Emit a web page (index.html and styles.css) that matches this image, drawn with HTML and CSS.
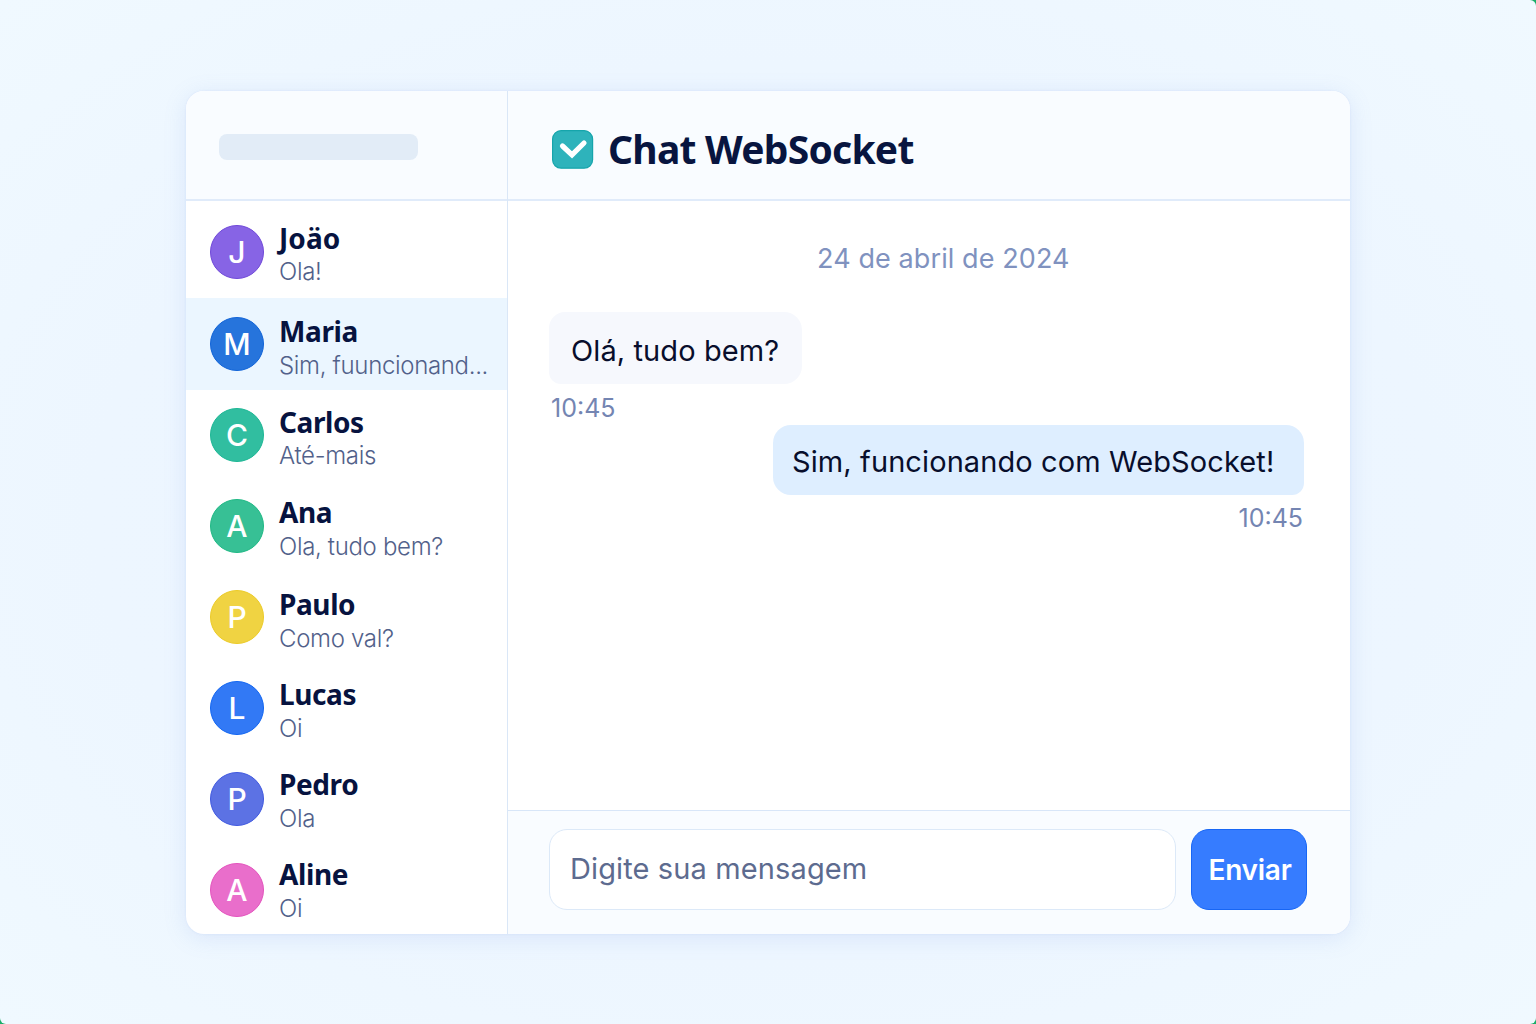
FILE: index.html
```html
<!DOCTYPE html>
<html lang="pt-BR">
<head>
<meta charset="utf-8">
<title>Chat WebSocket</title>
<link rel="stylesheet" href="styles.css">
</head>
<body>
<div class="page">
  <div class="card">
    <aside class="sidebar">
      <div class="sidebar-head"><div class="placeholder"></div></div>
      <ul class="contacts">
        <li class="contact"><span class="avatar violet">J</span><div class="info"><span class="name">Joäo</span><span class="preview">Ola!</span></div></li>
        <li class="contact active"><span class="avatar blue">M</span><div class="info"><span class="name">Maria</span><span class="preview">Sim, fuuncionand...</span></div></li>
        <li class="contact"><span class="avatar teal">C</span><div class="info"><span class="name">Carlos</span><span class="preview">Até-mais</span></div></li>
        <li class="contact"><span class="avatar green">A</span><div class="info"><span class="name">Ana</span><span class="preview">Ola, tudo bem?</span></div></li>
        <li class="contact"><span class="avatar yellow">P</span><div class="info"><span class="name">Paulo</span><span class="preview">Como val?</span></div></li>
        <li class="contact"><span class="avatar azure">L</span><div class="info"><span class="name">Lucas</span><span class="preview">Oi</span></div></li>
        <li class="contact"><span class="avatar indigo">P</span><div class="info"><span class="name">Pedro</span><span class="preview">Ola</span></div></li>
        <li class="contact"><span class="avatar pink">A</span><div class="info"><span class="name">Aline</span><span class="preview">Oi</span></div></li>
      </ul>
    </aside>
    <main class="chat">
      <header class="chat-head">
        <svg class="logo" width="42" height="40" viewBox="0 0 42 40"><rect x=".6" y=".6" width="40" height="37.600" rx="8.5" fill="#2eb3bb" stroke="#16a5ab" stroke-width="1.2"/><path d="M10.500 16 20 24.800 32 13" fill="none" stroke="#fff" stroke-width="5.2" stroke-linecap="round" stroke-linejoin="miter"/></svg>
        <h1 class="title">Chat WebSocket</h1>
      </header>
      <section class="messages">
        <div class="date">24 de abril de 2024</div>
        <div class="bubble received">Olá, tudo bem?</div>
        <div class="time">10:45</div>
        <div class="bubble sent">Sim, funcionando com WebSocket!</div>
        <div class="time own">10:45</div>
      </section>
      <footer class="composer">
        <div class="field">Digite sua mensagem</div>
        <button class="send">Enviar</button>
      </footer>
    </main>
  </div>
</div>
</body>
</html>
```
FILE: styles.css
```css
* { box-sizing: border-box; }
body { margin: 0; background: #18ad68; font-family: Inter, "Liberation Sans", sans-serif; }
.page { width: 1536px; height: 1024px; padding: 91px 186px 90px; overflow: hidden; border-radius: 0 6px 6px 6px; background: radial-gradient(ellipse at center, #ebf5ff 0%, #edf6ff 62%, #f0f9ff 100%); }
.card { display: grid; grid-template-columns: 322px 1fr; width: 1164px; height: 843px; overflow: hidden; border-radius: 18px; background: #fff; box-shadow: 0 4px 22px rgba(120, 150, 225, .17), 0 0 2px rgba(120, 150, 225, .15); }
.sidebar { min-height: 0; border-right: 1px solid #dae7f7; }
.sidebar-head { height: 110px; padding: 43px 33px; background: #f9fcff; border-bottom: 2px solid #e0ebfa; }
.placeholder { width: 199px; height: 26px; border-radius: 8px; background: #e2ecf7; }
.contacts { list-style: none; margin: 0; padding: 6px 0 0; }
.contact { display: flex; height: 91px; align-items: flex-start; gap: 15px; padding: 18px 0 0 24px; }
.contact.active { height: 92px; padding-top: 19px; background: #ebf6ff; }
.avatar { display: flex; flex: none; align-items: center; justify-content: center; width: 54px; height: 54px; border-radius: 50%; color: #fff; font-size: 30px; font-weight: 500; }
.violet { background: #8764e5; border: 1px solid #7049d8; }
.blue { background: #2674dc; border: 1px solid #1164d8; }
.teal { background: #31bea0; border: 1px solid #1db795; }
.green { background: #37c095; border: 1px solid #20b985; }
.yellow { background: #f0d342; border: 1px solid #eccb28; }
.azure { background: #3279f5; border: 1px solid #1266f2; }
.indigo { background: #5c72e4; border: 1px solid #4059df; }
.pink { background: #e96ecb; border: 1px solid #e353bd; }
.info { display: flex; flex-direction: column; margin-top: -3px; }
.contact:nth-child(4) .info, .contact:nth-child(6) .info { margin-top: -4px; }
.contact:nth-child(7) .info { margin-top: -5px; }
.contact:nth-child(8) .info { margin-top: -6px; }
.name { height: 36px; font: 700 28px/34px "Noto Sans", sans-serif; color: #07133f; letter-spacing: -.4px; }
.contact:first-child .name { height: 34px; line-height: 32px; letter-spacing: .1px; }
.contact:nth-child(3) .name { height: 35px; }
.preview { height: 32px; font-size: 24px; line-height: 32px; font-weight: 300; color: #52618a; white-space: nowrap; letter-spacing: -.33px; }
.chat { display: flex; flex-direction: column; min-width: 0; }
.chat-head { display: flex; height: 110px; padding: 38px 44px 0; gap: 14px; align-items: flex-start; background: #f9fcff; border-bottom: 2px solid #e0ebfa; }
.logo { flex: none; margin-top: 1px; }
.title { margin: -1px 0 0; font: 700 39px/42px "Noto Sans", sans-serif; color: #08153f; white-space: nowrap; letter-spacing: -.75px; }
.messages { display: flex; flex: 1; flex-direction: column; align-items: flex-start; padding: 38px 46px 0 41px; }
.date { height: 40px; padding-left: 268px; font-size: 27px; line-height: 40px; letter-spacing: .1px; color: #8092bf; }
.bubble { display: flex; align-items: center; white-space: nowrap; font-size: 29px; font-weight: 400; letter-spacing: .1px; color: #080e2c; }
.received { width: 253px; height: 72px; margin-top: 33px; padding: 4px 0 0 22px; border-radius: 16px 18px 18px 12px; background: #f6f8fd; }
.sent { width: 531px; height: 70px; align-self: flex-end; margin-top: 1px; padding: 3px 0 0 19px; border-radius: 18px 18px 12px 18px; background: #deeeff; }
.time { height: 40px; padding: 4px 0 0 2px; font-size: 25px; line-height: 40px; color: #7485b2; }
.own { align-self: flex-end; padding: 3px 1px 0 0; }
.composer { display: flex; flex: none; height: 124px; padding: 18px 43px 0 41px; gap: 15px; background: #f9fcff; border-top: 1px solid #d8e6f8; }
.field { flex: 1; height: 81px; padding-left: 20px; border: 1.5px solid #dce9f8; border-radius: 18px; background: #fff; color: #5d6b8f; font-size: 29px; line-height: 78px; letter-spacing: .12px; }
.send { width: 116px; height: 81px; padding: 0 0 0 2px; border: 1px solid #1766f5; border-radius: 18px; background: #367cff; color: #fff; font: 600 28px/78px Inter, sans-serif; letter-spacing: -.25px; }
```
